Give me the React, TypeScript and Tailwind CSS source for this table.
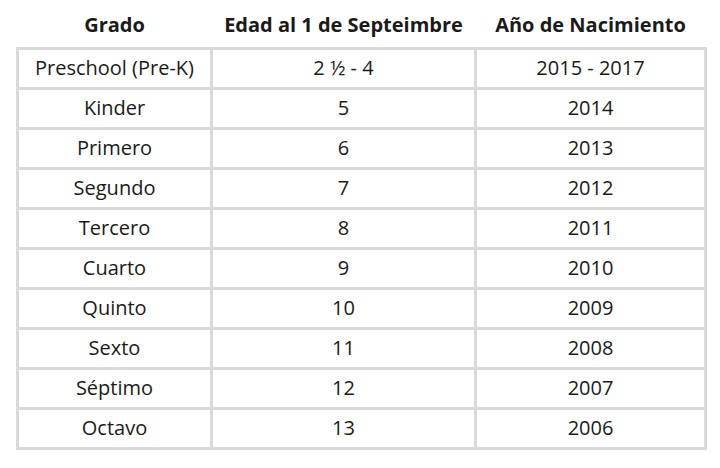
const rows: [string, string, string][] = [
  ['Preschool (Pre-K)', '2 ½ - 4', '2015 - 2017'],
  ['Kinder', '5', '2014'],
  ['Primero', '6', '2013'],
  ['Segundo', '7', '2012'],
  ['Tercero', '8', '2011'],
  ['Cuarto', '9', '2010'],
  ['Quinto', '10', '2009'],
  ['Sexto', '11', '2008'],
  ['Séptimo', '12', '2007'],
  ['Octavo', '13', '2006'],
];

export default function App() {
  return (
    <div className="h-[468px] w-[720px] bg-white pt-2 pl-4 font-['Open_Sans',sans-serif] text-[20px] text-[#1a1a1a]">
      <table className="w-[688px] table-fixed border-collapse">
        <thead>
          <tr className="h-10">
            <th className="w-[194px] pb-1 font-bold">Grado</th>
            <th className="w-[264px] pb-1 font-bold">Edad al 1 de Septeimbre</th>
            <th className="w-[230px] pb-1 font-bold">Año de Nacimiento</th>
          </tr>
        </thead>
        <tbody>
          {rows.map(([grado, edad, ano]) => (
            <tr key={grado} className="h-10">
              <td className="border-[3px] border-[#dadada] p-0 text-center">{grado}</td>
              <td className="border-[3px] border-[#dadada] p-0 text-center">{edad}</td>
              <td className="border-[3px] border-[#dadada] p-0 text-center">{ano}</td>
            </tr>
          ))}
        </tbody>
      </table>
    </div>
  );
}
